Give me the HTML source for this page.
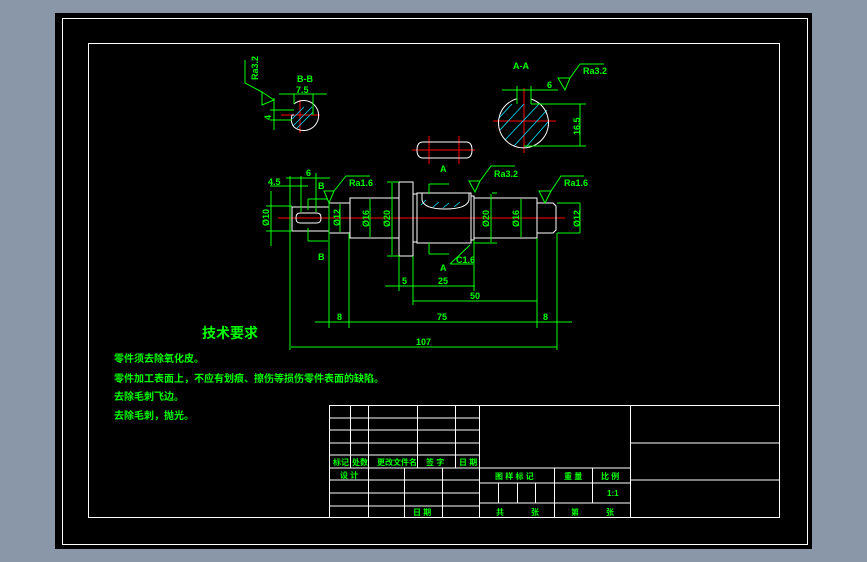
<!DOCTYPE html>
<html><head><meta charset="utf-8"><style>
html,body{margin:0;padding:0;width:867px;height:562px;overflow:hidden;background:#8a97a9}
svg{display:block}
text{font-family:"Liberation Sans","Noto Sans CJK SC",sans-serif;fill:#00ff00;font-weight:bold}
</style></head><body>
<svg width="867" height="562" viewBox="0 0 867 562" xmlns="http://www.w3.org/2000/svg">
<rect x="55" y="13" width="757" height="536" fill="#000"/>
<g fill="none" stroke="#fff" stroke-width="1">
<rect x="62.5" y="18.5" width="745" height="526"/>
<rect x="88.5" y="43.5" width="691" height="474"/>
</g>
<!-- centerlines -->
<g stroke="#ff0000" stroke-width="1">
<line x1="278" y1="218" x2="565" y2="218"/>
<line x1="412" y1="150" x2="475" y2="150"/>
<line x1="429" y1="136" x2="429" y2="164"/><line x1="459" y1="136" x2="459" y2="164"/>
<line x1="281" y1="115" x2="320" y2="115"/><line x1="300" y1="100" x2="300" y2="133"/>
<line x1="493" y1="121" x2="556" y2="121"/><line x1="524" y1="88" x2="524" y2="153"/>
</g>
<!-- hatching -->
<g stroke="#00e5ff" stroke-width="0.8">
<line x1="293" y1="126" x2="312" y2="107"/><line x1="297" y1="128" x2="313" y2="112"/><line x1="292" y1="119" x2="304" y2="107"/>
<line x1="500" y1="130" x2="524" y2="104"/><line x1="505" y1="140" x2="540" y2="103"/><line x1="514" y1="146" x2="547" y2="110"/><line x1="526" y1="147" x2="548" y2="122"/><line x1="499" y1="118" x2="512" y2="104"/>
<line x1="421" y1="205" x2="426" y2="200"/><line x1="433" y1="207" x2="439" y2="202"/><line x1="443" y1="208" x2="449" y2="203"/><line x1="454" y1="207" x2="460" y2="202"/>
</g>
<!-- white geometry -->
<g fill="none" stroke="#fff" stroke-width="1">
<path d="M292 207H329V231H292Z"/>
<path d="M329 203H350V233H329"/>
<path d="M350 198H399V238H350Z"/>
<path d="M399 182H413V256H399Z"/>
<path d="M413 194H417V242H413"/>
<path d="M417 193H471V243H417Z"/>
<path d="M422 193V200Q424 209 445 209Q467 209 469 200V193"/>
<path d="M471 196H474V240H471"/>
<path d="M474 198H537V238H474Z"/>
<path d="M537 203H553L556 206V230L553 233H537"/>
<path d="M300 213H317Q321 213 321 218Q321 223 317 223H300Q296 223 296 218Q296 213 300 213Z"/>
<path d="M423 142H466Q472 142 472 150Q472 158 466 158H423Q417 158 417 150Q417 142 423 142Z"/>
<path d="M294 104A15 15 0 1 1 294 127Q290 122 292 115L294 115"/>
<path d="M517 99H516A25 25 0 1 0 531 99"/>
</g>
<!-- green dimension lines -->
<g fill="none" stroke="#00ff00" stroke-width="1">
<line x1="290" y1="176" x2="290" y2="350"/><line x1="329" y1="203" x2="329" y2="328"/><line x1="349" y1="233" x2="349" y2="328"/>
<line x1="399" y1="256" x2="399" y2="291"/><line x1="413" y1="256" x2="413" y2="305"/><line x1="474" y1="240" x2="474" y2="291"/>
<line x1="537" y1="238" x2="537" y2="328"/><line x1="557" y1="233" x2="557" y2="350"/>
<line x1="385" y1="286" x2="475" y2="286"/><line x1="413" y1="301" x2="537" y2="301"/>
<line x1="315" y1="322" x2="572" y2="322"/><line x1="291" y1="347" x2="557" y2="347"/>
<line x1="270" y1="186" x2="308" y2="186"/><line x1="286" y1="178" x2="330" y2="178"/><line x1="301" y1="176" x2="301" y2="212"/><line x1="316" y1="173" x2="316" y2="212"/>
<line x1="266" y1="206" x2="292" y2="206"/><line x1="266" y1="231" x2="292" y2="231"/><line x1="271" y1="191" x2="271" y2="246"/>
<line x1="308" y1="199" x2="328" y2="199"/><line x1="308" y1="199" x2="308" y2="210"/><line x1="308" y1="228" x2="308" y2="241"/><line x1="308" y1="241" x2="328" y2="241"/>
<line x1="340" y1="204" x2="340" y2="232"/><line x1="370" y1="199" x2="370" y2="237"/>
<line x1="387" y1="182" x2="399" y2="182"/><line x1="387" y1="256" x2="399" y2="256"/><line x1="392" y1="183" x2="392" y2="255"/>
<line x1="492" y1="193" x2="497" y2="193"/><line x1="474" y1="243" x2="497" y2="243"/><line x1="491" y1="194" x2="491" y2="242"/><line x1="521" y1="199" x2="521" y2="237"/>
<line x1="557" y1="203" x2="580" y2="203"/><line x1="557" y1="233" x2="580" y2="233"/><line x1="580" y1="203" x2="580" y2="233"/>
<line x1="429" y1="184" x2="429" y2="194"/><line x1="429" y1="184" x2="449" y2="184"/><line x1="429" y1="243" x2="429" y2="254"/><line x1="429" y1="254" x2="449" y2="254"/>
<path d="M324 191L334 191L329 203Z M334 191L346 176H370"/>
<path d="M469 181L480 181L475 192Z M480 181L491 166H515"/>
<path d="M539 191L551 191L545 203Z M551 191L561 176H584"/>
<path d="M450 264L470 245 M450 264H473"/>
<!-- section views -->
<path d="M245 60V83L262 92 M262 92V105L274 100Z"/>
<line x1="279" y1="94" x2="327" y2="94"/><line x1="294" y1="94" x2="294" y2="104"/><line x1="313" y1="94" x2="313" y2="115"/>
<line x1="270" y1="110" x2="294" y2="110"/><line x1="270" y1="120" x2="292" y2="120"/><line x1="274" y1="98" x2="274" y2="130"/>
<line x1="502" y1="90" x2="558" y2="90"/><line x1="517" y1="86" x2="517" y2="104"/><line x1="531" y1="86" x2="531" y2="104"/>
<path d="M558 78L570 78L565 90Z M570 78L580 64H604"/>
<line x1="531" y1="104" x2="586" y2="104"/><line x1="524" y1="146" x2="586" y2="146"/><line x1="580" y1="104" x2="580" y2="146"/>
</g>
<!-- labels -->
<g font-size="9">
<text x="268" y="185">4.5</text><text x="306" y="176">6</text><text x="318" y="189">B</text><text x="318" y="260">B</text>
<text x="349" y="186">Ra1.6</text><text x="494" y="177">Ra3.2</text><text x="564" y="186">Ra1.6</text>
<text x="440" y="172">A</text><text x="440" y="271">A</text><text x="456" y="263">C1.6</text>
<text x="402" y="284">5</text><text x="438" y="284">25</text><text x="470" y="299">50</text>
<text x="337" y="320">8</text><text x="437" y="320">75</text><text x="543" y="320">8</text><text x="416" y="345">107</text>
<text x="297" y="82">B-B</text><text x="296" y="93">7.5</text><text x="513" y="69">A-A</text><text x="547" y="88">6</text><text x="583" y="74">Ra3.2</text>
</g>
<g font-size="9">
<text transform="translate(269,226) rotate(-90)">Ø10</text>
<text transform="translate(340,226) rotate(-90)">Ø12</text>
<text transform="translate(369,227) rotate(-90)">Ø16</text>
<text transform="translate(390,227) rotate(-90)">Ø20</text>
<text transform="translate(489,227) rotate(-90)">Ø20</text>
<text transform="translate(519,227) rotate(-90)">Ø16</text>
<text transform="translate(580,227) rotate(-90)">Ø12</text>
<text transform="translate(258,80) rotate(-90)">Ra3.2</text>
<text transform="translate(271,120) rotate(-90)">4</text>
<text transform="translate(580,135) rotate(-90)">16.5</text>
</g>
<text x="202" y="338" font-size="14">技术要求</text>
<g font-size="10">
<text x="114" y="362">零件须去除氧化皮。</text>
<text x="114" y="382">零件加工表面上，不应有划痕、擦伤等损伤零件表面的缺陷。</text>
<text x="114" y="400">去除毛刺飞边。</text>
<text x="114" y="419">去除毛刺，抛光。</text>
</g>
<!-- title block -->
<g fill="none" stroke="#fff" stroke-width="1">
<rect x="329.5" y="405.5" width="450" height="112"/>
<line x1="479.5" y1="405" x2="479.5" y2="518"/><line x1="630.5" y1="405" x2="630.5" y2="518"/>
<path d="M329 418H479M329 430H479M329 443H479M329 455H479M329 468H630M329 480H479M329 493H479M329 506H479"/>
<path d="M350.5 405V468M368.5 405V518M417.5 405V468M455.5 405V468M404.5 468V518M442.5 468V518"/>
<path d="M479 483H630M479 503H630M554.5 468V518M592.5 468V503M498.5 483V503M517.5 483V503M535.5 483V503"/>
<path d="M630 443H780M630 480H780"/>
</g>
<g font-size="8">
<text x="333" y="465">标记</text><text x="352" y="465">处数</text><text x="377" y="465">更改文件名</text><text x="426" y="465">签 字</text><text x="459" y="465">日 期</text>
<text x="340" y="478">设 计</text>
<text x="495" y="479">图 样 标 记</text><text x="564" y="479">重 量</text><text x="601" y="479">比 例</text>
<text x="607" y="496">1:1</text>
<text x="413" y="515">日 期</text>
<text x="496" y="515">共</text><text x="531" y="515">张</text><text x="571" y="515">第</text><text x="606" y="515">张</text>
</g>
</svg>
</body></html>
